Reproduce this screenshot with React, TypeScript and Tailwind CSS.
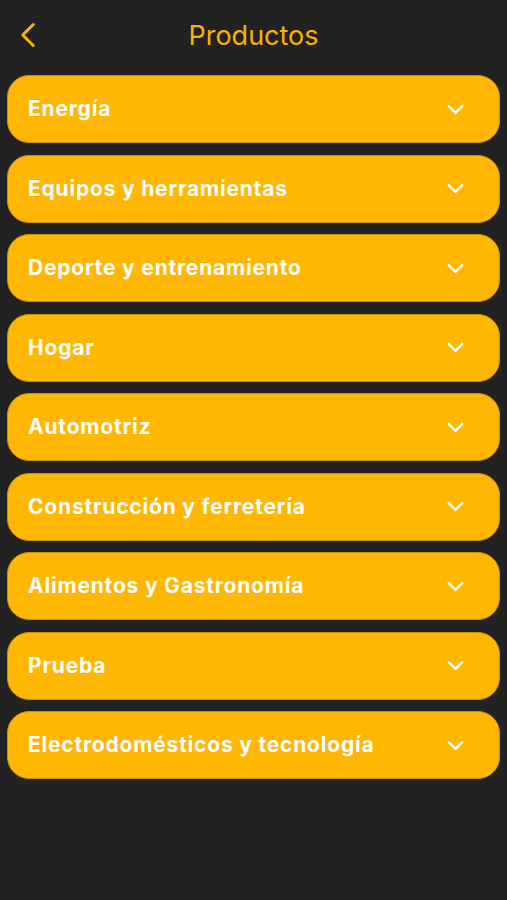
import { ChevronDown, ChevronLeft } from 'lucide-react';

const categories = [
  'Energía',
  'Equipos y herramientas',
  'Deporte y entrenamiento',
  'Hogar',
  'Automotriz',
  'Construcción y ferretería',
  'Alimentos y Gastronomía',
  'Prueba',
  'Electrodomésticos y tecnología',
];

export default function App() {
  return (
    <div
      className="min-h-[900px] w-full bg-[#222222]"
      style={{ fontFamily: 'Inter, "Open Sans", sans-serif' }}
    >
      <div className="relative flex h-[72px] items-center justify-center">
        <button className="absolute left-[7px] top-[14px] text-[#f5b400]">
          <ChevronLeft size={42} strokeWidth={1.7} />
        </button>
        <h1 className="text-[27px] font-normal text-[#f5b400]">Productos</h1>
      </div>
      <div className="flex flex-col gap-[11.5px] px-[7px] pt-[3px]">
        {categories.map((c) => (
          <div
            key={c}
            className="flex h-[68px] items-center justify-between rounded-[22px] border border-[#c99100] bg-[#ffb703] pl-[20px] pr-[30px]"
          >
            <span className="text-[21px] font-bold tracking-[0.8px] text-white">{c}</span>
            <ChevronDown size={27} strokeWidth={2.1} className="text-white" />
          </div>
        ))}
      </div>
    </div>
  );
}
